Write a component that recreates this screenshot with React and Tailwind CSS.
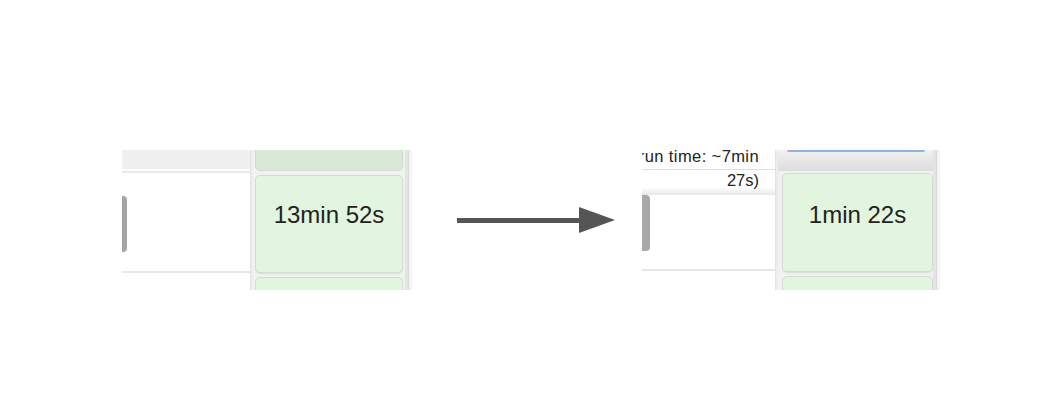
export default function App() {
  const font = { fontFamily: '"Liberation Sans", Arial, sans-serif' };
  return (
    <div className="w-[1062px] h-[404px] bg-white flex items-start pt-[150px]" style={font}>
      {/* Left panel */}
      <div className="ml-[122px] w-[290px] h-[140px] overflow-hidden flex">
        <div className="w-[128px] flex flex-col">
          <div className="h-[19px] shrink-0 bg-[#f0f0f0]" />
          <div className="h-[2px] shrink-0" />
          <div className="h-[2px] shrink-0 bg-[#e9e9e9]" />
          <div className="h-[98px] shrink-0 flex flex-col">
            <div className="mt-[23px] w-[5px] h-[56px] bg-[#a4a4a4] rounded-r-[4px]" />
          </div>
          <div className="h-[2px] shrink-0 bg-[#e6e6e6]" />
        </div>
        <div className="w-[162px] flex bg-[#f1f1f1]">
          <div className="w-[5px] border-l border-[#e2e2e2] bg-gradient-to-r from-[#ececec] to-[#f4f4f4]" />
          <div className="w-[148px] flex flex-col gap-[4px]">
            <div className="-mt-[78px] h-[99px] shrink-0 rounded-[5px] border border-[#cfdccd] bg-[#d8ead5]" />
            <div className="h-[98px] shrink-0 rounded-[5px] border border-[#d2dcd0] bg-[#e2f5df] shadow-[0_1px_1px_rgba(0,0,0,0.08)] flex justify-center pt-[25px]">
              <span className="text-[24px] leading-[28px] text-[#222]">13min 52s</span>
            </div>
            <div className="h-[98px] shrink-0 rounded-[5px] border border-[#d2dcd0] bg-[#e2f5df]" />
          </div>
          <div className="w-[9px] flex">
            <div className="w-[2px]" />
            <div className="w-[3px] bg-[#e4e4e4]" />
            <div className="w-[4px] bg-[#f4f4f4] border-l border-[#d9d9d9]" />
          </div>
        </div>
      </div>

      {/* Arrow */}
      <svg className="ml-[45px] mt-[57px] shrink-0" width="158" height="26" viewBox="0 0 158 26">
        <rect x="0" y="11" width="124" height="5" fill="#555555" />
        <polygon points="122,0 158,13 122,26" fill="#555555" />
      </svg>

      {/* Right panel */}
      <div className="ml-[27px] w-[298px] h-[140px] overflow-hidden flex">
        <div className="w-[133px] flex flex-col">
          <div className="h-[20px] shrink-0 flex justify-end overflow-hidden pr-[16px] border-b border-[#dddddd]">
            <span className="whitespace-nowrap text-[16.5px] leading-[18px] tracking-[0.4px] text-[#222] -mt-[3px]">(approx. run time: ~7min</span>
          </div>
          <div className="h-[25px] shrink-0 flex justify-end pr-[16px] bg-gradient-to-b from-white from-70% to-[#e6e6e6]">
            <span className="text-[16.5px] leading-[18px] text-[#222] pt-[1px]">27s)</span>
          </div>
          <div className="h-[74px] shrink-0 flex flex-col">
            <div className="w-[8px] h-[56px] bg-[#a8a8a8] rounded-r-[4px] flex items-center">
              <span className="text-[10px] leading-[10px] text-[#e8e8e8] -ml-[3px] mt-[14px]">›</span>
            </div>
          </div>
          <div className="h-[2px] shrink-0 bg-[#e6e6e6]" />
        </div>
        <div className="w-[165px] flex bg-[#f1f1f1]">
          <div className="w-[3px] border-l border-[#e2e2e2] bg-[#ececec]" />
          <div className="w-[155px] flex flex-col">
            <div className="h-[21px] shrink-0 bg-gradient-to-b from-[#f2f2f2] to-[#dcdcdc] flex justify-center">
              <div className="w-[138px] h-[2px] bg-[#8fb2e6] rounded-b-[2px]" />
            </div>
            <div className="pl-[4px] flex flex-col gap-[4px] pt-[2px]">
              <div className="w-[151px] h-[99px] shrink-0 rounded-[5px] border border-[#d2dcd0] bg-[#e2f5df] shadow-[0_1px_1px_rgba(0,0,0,0.08)] flex justify-center pt-[27px]">
                <span className="text-[24px] leading-[28px] text-[#222]">1min 22s</span>
              </div>
              <div className="w-[151px] h-[98px] shrink-0 rounded-[5px] border border-[#d2dcd0] bg-[#e2f5df]" />
            </div>
          </div>
          <div className="w-[7px] flex">
            <div className="w-[3px] bg-[#e4e4e4]" />
            <div className="w-[4px] bg-[#f4f4f4] border-l border-[#d9d9d9]" />
          </div>
        </div>
      </div>
    </div>
  );
}
